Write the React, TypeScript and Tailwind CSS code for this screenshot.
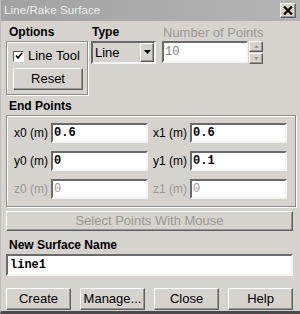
import React from "react";

const raised =
  "border border-t-white border-l-white border-b-[#5e5e5e] border-r-[#5e5e5e] shadow-[inset_-1px_-1px_0_#9a9896]";
const sunken =
  "border-2 border-t-[#6a6a6a] border-l-[#6a6a6a] border-b-[#f4f4f4] border-r-[#f4f4f4]";
const etched =
  "border border-[#8e8c88] shadow-[inset_1px_1px_0_#ffffff,1px_1px_0_#ffffff]";
const mono = "font-['Liberation_Mono',monospace] font-bold text-[12px]";

function Field({ label, value, disabled }: { label: string; value: string; disabled?: boolean }) {
  return (
    <div className="flex items-center h-[20px]">
      <span className={`w-[37px] text-[12px] whitespace-nowrap ${disabled ? "text-[#9a9894]" : "text-black"}`}>{label}</span>
      <div className={`${sunken} w-[97px] h-[20px] bg-white flex items-center pl-[1px] ${mono} ${disabled ? "text-[#9a9894] font-normal" : "text-black"}`}>
        {value}
      </div>
    </div>
  );
}

export default function App() {
  return (
    <div className="w-[300px] h-[314px] bg-[#d6d3ce] flex flex-col font-['Liberation_Sans',Arial,sans-serif] text-black overflow-hidden border-b-[3px] border-b-[#4a4a4a] border-l border-l-[#bdbdbd]">
      <div className="h-[21px] shrink-0 bg-gradient-to-r from-[#a2a2a2] to-[#b4b4b4] flex items-center justify-between pl-[3px] pr-[4px]">
        <span className="text-[11.5px] text-[#eeeeee] tracking-[0.1px]">Line/Rake Surface</span>
        <div className={`${raised} w-[16px] h-[15px] bg-[#d6d3ce] flex items-center justify-center`}>
          <svg width="10" height="9" viewBox="0 0 10 9">
            <path d="M1 0.5 L9 8.5 M9 0.5 L1 8.5" stroke="black" strokeWidth="2.2" />
          </svg>
        </div>
      </div>

      <div className="flex flex-col pl-[5px] pr-[4px] pt-[4px]">
        <div className="flex">
          <div className="flex flex-col w-[82px]">
            <span className="text-[12px] font-bold pl-[3px] h-[15px] leading-[15px]">Options</span>
            <div className={`${etched} mt-[1px] h-[54px] flex flex-col pl-[6px] pt-[7px]`}>
              <div className="flex items-center h-[14px]">
                <div className="w-[11px] h-[11px] bg-white border border-t-[#5a5a5a] border-l-[#5a5a5a] border-b-white border-r-white flex items-center justify-center">
                  <svg width="8" height="8" viewBox="0 0 8 8">
                    <path d="M1 3.5 L3 6 L7 1" stroke="black" strokeWidth="1.6" fill="none" />
                  </svg>
                </div>
                <span className="text-[13px] ml-[4px]">Line Tool</span>
              </div>
              <div className={`${raised} mt-[5px] w-[70px] h-[22px] flex items-center justify-center text-[13px]`}>Reset</div>
            </div>
          </div>

          <div className="flex flex-col ml-[3px] w-[65px]">
            <span className="text-[12px] font-bold pl-[1px] h-[15px] leading-[15px]">Type</span>
            <div className={`${sunken} mt-[1px] h-[23px] flex items-center bg-[#d6d3ce]`}>
              <span className="text-[13px] pl-[2px] flex-1">Line</span>
              <div className={`${raised} w-[14px] h-full flex items-center justify-center bg-[#d6d3ce]`}>
                <svg width="7" height="5" viewBox="0 0 7 5">
                  <path d="M0 0 H7 L3.5 4 Z" fill="black" />
                </svg>
              </div>
            </div>
          </div>

          <div className="flex flex-col ml-[6px]">
            <span className="text-[13px] text-[#9a9894] pl-[1px] h-[15px] leading-[15px] whitespace-nowrap">Number of Points</span>
            <div className="flex mt-[1px]">
              <div className={`${sunken} w-[86px] h-[22px] bg-white flex items-center pl-[1px] font-['Liberation_Mono',monospace] text-[12px] text-[#808080]`}>10</div>
              <div className="flex flex-col ml-[1px] w-[14px] h-[23px]">
                <div className={`${raised} h-[11px] flex items-center justify-center`}>
                  <svg width="5" height="3" viewBox="0 0 5 3"><path d="M0 3 H5 L2.5 0 Z" fill="#9a9894" /></svg>
                </div>
                <div className={`${raised} h-[11px] mt-[1px] flex items-center justify-center`}>
                  <svg width="5" height="3" viewBox="0 0 5 3"><path d="M0 0 H5 L2.5 3 Z" fill="#9a9894" /></svg>
                </div>
              </div>
            </div>
          </div>
        </div>

        <span className="text-[12px] font-bold pl-[3px] mt-[4px] h-[15px] leading-[15px]">End Points</span>
        <div className={`${etched} mt-[1px] h-[92px] flex flex-col justify-center gap-[8px] pl-[7px]`}>
          <div className="flex gap-[5px]">
            <Field label="x0 (m)" value="0.6" />
            <Field label="x1 (m)" value="0.6" />
          </div>
          <div className="flex gap-[5px]">
            <Field label="y0 (m)" value="0" />
            <Field label="y1 (m)" value="0.1" />
          </div>
          <div className="flex gap-[5px]">
            <Field label="z0 (m)" value="0" disabled />
            <Field label="z1 (m)" value="0" disabled />
          </div>
        </div>

        <div className={`${raised} mt-[4px] mr-[3px] h-[20px] flex items-center justify-center text-[13px] text-[#9a9894]`}>
          Select Points With Mouse
        </div>

        <span className="text-[12px] font-bold pl-[3px] mt-[7px] h-[15px] leading-[15px]">New Surface Name</span>
        <div className={`${sunken} mt-[1px] mr-[3px] h-[22px] bg-white flex items-center pl-[2px] ${mono}`}>line1</div>

        <div className="flex justify-between mt-[12px] mr-[3px]">
          {["Create", "Manage...", "Close", "Help"].map((t) => (
            <div key={t} className={`${raised} w-[65px] h-[22px] flex items-center justify-center text-[13px]`}>{t}</div>
          ))}
        </div>
      </div>
    </div>
  );
}
